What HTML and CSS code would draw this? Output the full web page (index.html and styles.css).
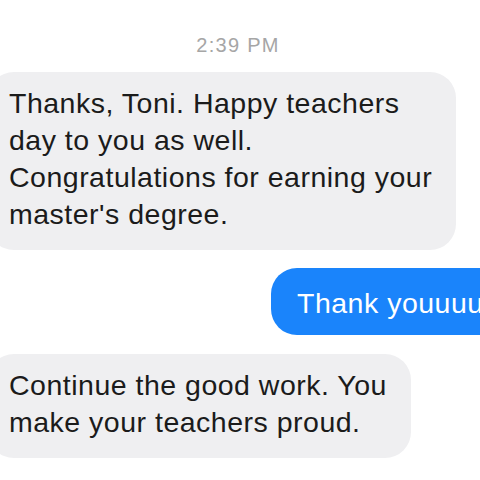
FILE: index.html
```html
<!DOCTYPE html>
<html>
<head>
<meta charset="utf-8">
<link rel="stylesheet" href="styles.css">
</head>
<body>
<div class="chat">
  <div class="time">2:39 PM</div>
  <div class="bubble in first">Thanks, Toni. Happy teachers<br>day to you as well.<br>Congratulations for earning your<br>master's degree.</div>
  <div class="bubble out">Thank youuuu</div>
  <div class="bubble in">Continue the good work. You<br>make your teachers proud.</div>
</div>
</body>
</html>
```
FILE: styles.css
```css
html, body {
  margin: 0;
  padding: 0;
  background: #ffffff;
  overflow: hidden;
  width: 480px;
  height: 480px;
}
.chat {
  display: flex;
  flex-direction: column;
  align-items: flex-start;
  font-family: "Liberation Sans", Arial, sans-serif;
  padding-top: 33px;
}
.time {
  align-self: stretch;
  text-align: center;
  font-size: 20px;
  letter-spacing: 1.3px;
  line-height: 24px;
  color: #a6a6a6;
  margin-left: -4px;
}
.bubble {
  font-size: 28.5px;
  letter-spacing: 0.5px;
  line-height: 37px;
  border-radius: 26px;
  white-space: nowrap;
}
.in {
  background: #efeff1;
  color: #1b1b1b;
  margin-left: -12px;
  padding: 13px 24px 17px 21px;
}
.first {
  margin-top: 15px;
}
.out {
  background: #1a84fb;
  color: #ffffff;
  margin-top: 18px;
  margin-left: 271px;
  padding: 17px 30px 13px 26px;
}
.out + .in {
  margin-top: 19px;
}
```
